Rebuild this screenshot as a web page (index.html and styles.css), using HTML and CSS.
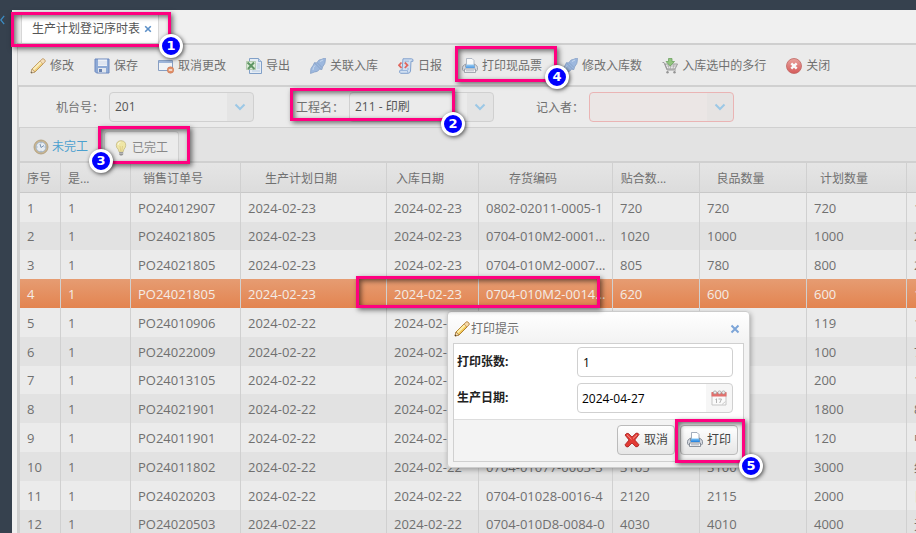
FILE: index.html
```html
<!DOCTYPE html>
<html lang="zh-CN">
<head>
  <meta charset="UTF-8">
  <title>生产计划登记序时表</title>
  <meta name="viewport" content="width=device-width, initial-scale=1.0">
  <link rel="stylesheet" href="styles.css">
</head>
<body>
  <svg class="defs" aria-hidden="true">
    <linearGradient id="gPrint" x1="0" y1="0" x2="0" y2="1"><stop offset="0" stop-color="#7ec4f7"/><stop offset="1" stop-color="#1e7fe0"/></linearGradient>
    <linearGradient id="gRed" x1="0" y1="0" x2="0" y2="1"><stop offset="0" stop-color="#e98b84"/><stop offset="1" stop-color="#cf2a2a"/></linearGradient>
    <symbol id="i-pencil" viewBox="0 0 16 16">
      <path d="M1 15l1-4L11 2q2-2 3.500-.5T14 5L5 14z" fill="#f3c95a" stroke="#b08030"/>
      <path d="M3.500 11.500L12 3" stroke="#fdeeb0" stroke-width="2"/>
      <path d="M11 2q2-2 3.500-.5T14 5l-1 1-3-3z" fill="#f6d9a8" stroke="#b98a55" stroke-width=".7"/>
      <path d="M2 11l3 3-4 1z" fill="#f5deb5" stroke="#a07840" stroke-width=".7"/>
      <path d="M1 13.500L2.500 15H1z" fill="#333"/>
    </symbol>
    <symbol id="i-save" viewBox="0 0 16 16">
      <path d="M1 1h14v14H2.500L1 13.500z" fill="#6f95cf" stroke="#4468b0"/>
      <path d="M4 1.500h9V8H4z" fill="#eef3fa"/><path d="M4 4h9M4 6h9" stroke="#b6c9e4" stroke-width=".7"/>
      <path d="M4 10h8v4.500H4z" fill="#dfe6f0"/><path d="M5 11h3v3H5z" fill="#3f5f9c"/>
    </symbol>
    <symbol id="i-revert" viewBox="0 0 16 16">
      <path d="M.5 2.500h14v10H.5z" fill="#f4f6fa" stroke="#6685b5"/><path d="M1 3h13v2H1z" fill="#86a5d6"/>
      <circle cx="12.500" cy="12" r="3.200" fill="#e2713a" stroke="#b9522a" stroke-width=".6"/><path d="M10.800 12h3.400" stroke="#fff" stroke-width="1.300"/>
    </symbol>
    <symbol id="i-excel" viewBox="0 0 16 16">
      <path d="M3.500.5h9l3 3v12h-12z" fill="#e3edf8" stroke="#5e88bd"/><path d="M12.500.5v3h3" fill="#bcd2ee" stroke="#5e88bd" stroke-width=".8"/>
      <path d="M11 6h3M11 8h3M11 10h3M6 13h8" stroke="#9ab6d8" stroke-width=".8"/>
      <path d="M.5 3.500h9v8h-9z" fill="#d8ead2" stroke="#7da775" stroke-width=".6"/>
      <path d="M1.500 4.500L8.500 11M8 4.500L2 11" stroke="#317a39" stroke-width="2"/>
    </symbol>
    <symbol id="i-plug" viewBox="0 0 16 16">
      <path d="M.5 15.500Q0 10 3 7.500L4.500 4.500l2 .5L9 2q3-.5 5-1.800h1.500Q15.800 6 12.500 9l-.5 2.500-2.500-.3Q8 14 4.500 14z" fill="#84a8da" stroke="#6084b8" stroke-width=".7"/>
      <path d="M4.500 5L11 11.500M7 4.500l5 5" stroke="#5c7fb4" stroke-width=".7"/><path d="M3 12q0-3 2-4.500M10 3.500l3-1.500" stroke="#b9d0ee" fill="none"/>
    </symbol>
    <symbol id="i-script" viewBox="0 0 16 16">
      <path d="M5 .8h8.500q2 0 1.500 2.500h-2L12.500 13q-.4 2.300-2.500 2.300H2.500Q.8 14.500 2 12.200h2z" fill="#c9dcf4" stroke="#5d88c4"/>
      <path d="M2 12.500h7.500q-.3 2 .7 2.600M6.500 3.200H11M9 11h2" fill="none" stroke="#7fa4d6"/>
      <path d="M3.500 4.500L1 7.200 3.500 10M6.800 4.500l2.700 2.700L6.800 10" fill="none" stroke="#dd3b30" stroke-width="1.800"/>
    </symbol>
    <symbol id="i-print" viewBox="0 0 16 16">
      <path d="M4.500.5H10L12 2.500V9H4.500z" fill="#fff" stroke="#8b98ab" stroke-width=".8"/>
      <path d="M3.500 6L1 8q-.8 1-.5 3.500 0 1 1 1.200h13q1-.2 1-1.200Q15.800 9 15 8l-2.500-2v3h-9z" fill="#d3d7de" stroke="#747b88" stroke-width=".8"/>
      <path d="M4.500 6.500H12L13 10H3.500z" fill="url(#gPrint)"/>
      <path d="M2.500 11h11v3.500h-11z" fill="#f5f6f8" stroke="#747b88" stroke-width=".8"/><path d="M4 12.800h8" stroke="#a9b0bc"/>
    </symbol>
    <symbol id="i-cart" viewBox="0 0 16 16">
      <path d="M.5 4.500H2l3 7.500h9M3 6h12.500L13 11H5z" fill="#e4e4e4" stroke="#777" stroke-width=".9"/>
      <path d="M5 8h10M6 6l1 5M8.500 6.500V11M12 6l-1 5" stroke="#929292" stroke-width=".7"/>
      <circle cx="5.500" cy="14.200" r="1.200" fill="#777"/><circle cx="12.500" cy="14.200" r="1.200" fill="#777"/>
      <path d="M6.500.5h3.500v3h2.500L8.200 8 4 3.500h2.500z" fill="#75b95c" stroke="#458b35" stroke-width=".8"/>
    </symbol>
    <symbol id="i-close" viewBox="0 0 16 16">
      <circle cx="8" cy="8" r="7.500" fill="url(#gRed)" stroke="#b13a36" stroke-width=".8"/>
      <path d="M5.300 5.300l5.400 5.400M10.700 5.300l-5.400 5.400" stroke="#fff" stroke-width="2.400"/>
    </symbol>
    <symbol id="i-clock" viewBox="0 0 16 16">
      <circle cx="8" cy="8" r="7" fill="#c2a878" stroke="#9a8256" stroke-width=".8"/><circle cx="8" cy="8" r="5" fill="#e9f0f7" stroke="#7c9abc" stroke-width=".8"/>
      <path d="M7 5l1 3.500L11 6.500M8 3.500v.8M8 11.800v.8M3.700 8h.8M11.600 8h.8" stroke="#577ba5" fill="none"/>
    </symbol>
    <symbol id="i-bulb" viewBox="0 0 16 16">
      <path d="M8 .7q5 .3 4.700 5-.2 2-1.700 3.500L10 12H6.200L5.200 9.200Q3.300 7.700 3.300 5.500 3.300 1 8 .7z" fill="#f1e58f" stroke="#b8a860" stroke-width=".8"/>
      <path d="M5 5q.3-2.500 2.500-2.800" stroke="#fffbe0" fill="none"/><path d="M7 6l.7 5M9.500 6l-.7 5" stroke="#d1b04c" stroke-width=".6"/>
      <path d="M6.200 12h4v2.500L9 15.500H7.300L6.200 14.500z" fill="#777"/><path d="M6.200 13.300h4" stroke="#ccc" stroke-width=".7"/>
    </symbol>
    <symbol id="i-cross" viewBox="0 0 16 16">
      <path d="M1 3q1.500-2.500 3.500-1.500L8 5l4-3.800q2-.7 3 1.300L10.800 8l4.200 4.800q-.8 2.500-3.200 2L8 11l-4 4q-2.300.3-3-2.200L5 8z" fill="#e23a34" stroke="#a51a1a" stroke-width=".8"/>
      <path d="M3 2.800l4.500 4.400M13 2.800L9 6.500" stroke="#f59a92"/>
    </symbol>
    <symbol id="i-calendar" viewBox="0 0 16 16">
      <path d="M1 3h14v12H1z" fill="#fafafa" stroke="#c6c6c6"/><path d="M.5 2h15v4.500H.5z" fill="#e36f6c"/>
      <circle cx="4" cy="2.500" r="1.600" fill="#eee" stroke="#9a9a9a" stroke-width=".7"/><circle cx="8.500" cy="2.500" r="1.600" fill="#eee" stroke="#9a9a9a" stroke-width=".7"/><circle cx="12.500" cy="2.500" r="1.600" fill="#eee" stroke="#9a9a9a" stroke-width=".7"/>
      <path d="M4.500 9.500l1-.7V13M7.500 9h3L8.700 13" stroke="#b3b3b3" fill="none"/><path d="M11 14.500l3.500-3" stroke="#ccc"/>
    </symbol>
    <symbol id="i-down" viewBox="0 0 12 8"><path d="M1.500 1.500L6 6l4.500-4.500" fill="none" stroke="#9cc8e6" stroke-width="2"/></symbol>
    <symbol id="i-x" viewBox="0 0 10 10"><path d="M1.500 1.500l7 7M8.500 1.500l-7 7" fill="none" stroke="currentColor" stroke-width="2"/></symbol>
    <symbol id="i-back" viewBox="0 0 6 12"><path d="M5 1L1 6l4 5" fill="none" stroke="#3c8cc4" stroke-width="1.500"/></symbol>
  </svg>

  <aside class="rail"><svg class="back"><use href="#i-back"/></svg></aside>

  <main class="page">
    <nav class="page-tabs">
      <a href="#" class="page-tab">生产计划登记序时表 <svg class="tab-close"><use href="#i-x"/></svg></a>
    </nav>

    <section class="panel">
      <div class="toolbar">
        <button><svg><use href="#i-pencil"/></svg>修改</button>
        <button><svg><use href="#i-save"/></svg>保存</button>
        <button><svg><use href="#i-revert"/></svg>取消更改</button>
        <button><svg><use href="#i-excel"/></svg>导出</button>
        <button><svg><use href="#i-plug"/></svg>关联入库</button>
        <button><svg><use href="#i-script"/></svg>日报</button>
        <button><svg><use href="#i-print"/></svg>打印现品票</button>
        <button><svg><use href="#i-plug"/></svg>修改入库数</button>
        <button><svg><use href="#i-cart"/></svg>入库选中的多行</button>
        <button><svg><use href="#i-close"/></svg>关闭</button>
      </div>

      <form class="filters">
        <div class="field">
          <label for="machine">机台号：</label>
          <span class="combo"><select id="machine"><option>201</option></select><svg><use href="#i-down"/></svg></span>
        </div>
        <div class="field">
          <label for="process">工程名：</label>
          <span class="combo"><select id="process"><option>211 - 印刷</option></select><svg><use href="#i-down"/></svg></span>
        </div>
        <div class="field">
          <label for="writer">记入者：</label>
          <span class="combo invalid"><select id="writer"><option></option></select><svg><use href="#i-down"/></svg></span>
        </div>
      </form>

      <nav class="status-tabs">
        <a href="#"><svg><use href="#i-clock"/></svg>未完工</a>
        <a href="#" class="active"><svg><use href="#i-bulb"/></svg>已完工</a>
      </nav>

      <div class="grid">
        <table>
          <colgroup>
            <col class="c-no"><col class="c-flag"><col class="c-order"><col class="c-plan"><col class="c-in">
            <col class="c-code"><col class="c-fit"><col class="c-good"><col class="c-qty"><col>
          </colgroup>
          <thead>
            <tr><th>序号</th><th class="left">是...</th><th>销售订单号</th><th>生产计划日期</th><th>入库日期</th><th>存货编码</th><th>贴合数...</th><th>良品数量</th><th>计划数量</th><th></th></tr>
          </thead>
          <tbody>
            <tr><td>1</td><td>1</td><td>PO24012907</td><td>2024-02-23</td><td>2024-02-23</td><td>0802-02011-0005-1</td><td>720</td><td>720</td><td>720</td><td>1</td></tr>
            <tr><td>2</td><td>1</td><td>PO24021805</td><td>2024-02-23</td><td>2024-02-23</td><td>0704-010M2-0001...</td><td>1020</td><td>1000</td><td>1000</td><td>2</td></tr>
            <tr><td>3</td><td>1</td><td>PO24021805</td><td>2024-02-23</td><td>2024-02-23</td><td>0704-010M2-0007...</td><td>805</td><td>780</td><td>800</td><td>2</td></tr>
            <tr class="selected"><td>4</td><td>1</td><td>PO24021805</td><td>2024-02-23</td><td>2024-02-23</td><td>0704-010M2-0014...</td><td>620</td><td>600</td><td>600</td><td>1</td></tr>
            <tr><td>5</td><td>1</td><td>PO24010906</td><td>2024-02-22</td><td>2024-02-22</td><td></td><td></td><td></td><td>119</td><td>1</td></tr>
            <tr><td>6</td><td>1</td><td>PO24022009</td><td>2024-02-22</td><td>2024-02-22</td><td></td><td></td><td></td><td>100</td><td>7</td></tr>
            <tr><td>7</td><td>1</td><td>PO24013105</td><td>2024-02-22</td><td>2024-02-22</td><td></td><td></td><td></td><td>200</td><td>1</td></tr>
            <tr><td>8</td><td>1</td><td>PO24021901</td><td>2024-02-22</td><td>2024-02-22</td><td></td><td></td><td></td><td>1800</td><td>8</td></tr>
            <tr><td>9</td><td>1</td><td>PO24011901</td><td>2024-02-22</td><td>2024-02-22</td><td></td><td></td><td></td><td>120</td><td>中</td></tr>
            <tr><td>10</td><td>1</td><td>PO24011802</td><td>2024-02-22</td><td>2024-02-22</td><td>0704-01077-0003-3</td><td>3165</td><td>3100</td><td>3000</td><td>纸</td></tr>
            <tr><td>11</td><td>1</td><td>PO24020203</td><td>2024-02-22</td><td>2024-02-22</td><td>0704-01028-0016-4</td><td>2120</td><td>2115</td><td>2000</td><td>日</td></tr>
            <tr><td>12</td><td>1</td><td>PO24020503</td><td>2024-02-22</td><td>2024-02-22</td><td>0704-010D8-0084-0</td><td>4030</td><td>4010</td><td>4000</td><td>无</td></tr>
          </tbody>
        </table>
      </div>
    </section>
  </main>

  <div class="dialog" role="dialog" aria-labelledby="dialogTitle">
    <header>
      <svg class="icon"><use href="#i-pencil"/></svg>
      <span id="dialogTitle">打印提示</span>
      <button class="dialog-close" aria-label="关闭"><svg><use href="#i-x"/></svg></button>
    </header>
    <form class="dialog-body">
      <div class="row">
        <label for="copies">打印张数:</label>
        <input type="text" id="copies" value="1">
      </div>
      <div class="row">
        <label for="date">生产日期:</label>
        <span class="date"><input type="text" id="date" value="2024-04-27"><svg><use href="#i-calendar"/></svg></span>
      </div>
      <div class="actions">
        <button type="button"><svg><use href="#i-cross"/></svg>取消</button>
        <button type="button"><svg><use href="#i-print"/></svg>打印</button>
      </div>
    </form>
  </div>

  <!-- step callouts -->
  <div class="mark mark-tab"><b>1</b></div>
  <div class="mark mark-process"><b>2</b></div>
  <div class="mark mark-done"><b>3</b></div>
  <div class="mark mark-print"><b>4</b></div>
  <div class="mark mark-row"></div>
  <div class="mark mark-submit"><b>5</b></div>
</body>
</html>
```
FILE: styles.css
```css
* { box-sizing: border-box; }
body { margin: 0; padding-top: 10px; height: 100vh; display: flex; overflow: hidden; position: relative; background: #36414e; color: #707070; font: 12px/18px "Open Sans", "Noto Sans CJK SC", sans-serif; }
a { color: inherit; text-decoration: none; }
button, input, select { font: inherit; color: inherit; }
.defs { position: absolute; width: 0; height: 0; }

.rail { width: 12px; flex: none; }
.back { display: block; width: 5px; height: 12px; margin-top: 4px; }

.page { flex: 1; min-width: 0; display: flex; flex-direction: column; background: #f0f0f0; }
.page-tabs { display: flex; padding: 4px 0 0 9px; height: 33px; }
.page-tab { display: flex; align-items: center; gap: 4px; padding: 0 6px 0 10px; background: #fff; border: 1px solid #d8d8d8; border-bottom: 0; color: #555; }
.tab-close { width: 8px; height: 8px; color: #5b8fc7; }

.panel { flex: 1; min-height: 0; margin-left: 5px; border-left: 1px solid #cfcfcf; border-top: 2px solid #cfcfcf; background: #ebebeb; }
.toolbar { display: flex; height: 42px; padding: 2px 0 0 2px; border-bottom: 2px solid #d0d0d0; }
.toolbar button { display: flex; align-items: center; gap: 4px; padding: 0 10px; border: 0; background: none; white-space: nowrap; }
.toolbar svg { width: 16px; height: 16px; opacity: .75; }

.filters { display: flex; align-items: center; gap: 42px; height: 41px; padding-left: 37px; border-left: 1px solid #d0d0d0; border-bottom: 1px solid #d0d0d0; }
.field { display: flex; align-items: center; white-space: nowrap; }
.field label { width: 53px; padding-top: 2px; }
.combo { position: relative; width: 145px; height: 30px; border: 1px solid #d0d0d0; border-radius: 4px; background: linear-gradient(to left, #e4e4e4 26px, #ebebeb 26px); }
.combo.invalid { border-color: #eab4b4; background: linear-gradient(to left, #e6e3e2 26px, #ebe6e5 26px); }
.combo select { display: block; width: 100%; height: 100%; padding: 0 30px 0 5px; border: 0; background: none; appearance: none; color: #555; }
.combo svg { position: absolute; right: 7px; top: 10px; width: 12px; height: 8px; pointer-events: none; }

.status-tabs { display: flex; gap: 6px; height: 33px; padding: 3px 0 0 5px; border-left: 2px solid #d0d0d0; background: #e3e3e3; }
.status-tabs a { display: flex; align-items: center; gap: 3px; padding: 2px 10px 0 8px; color: #4ba0cf; }
.status-tabs a.active { border: 1px solid #d0d0d0; border-bottom: 0; border-radius: 4px 4px 0 0; background: #ebebeb; color: #888; }
.status-tabs svg { width: 16px; height: 16px; opacity: .75; }

.grid { overflow: hidden; border-left: 2px solid #d0d0d0; border-top: 2px solid #d0d0d0; }
table { table-layout: fixed; width: 100%; min-width: 980px; border-spacing: 0; }
.c-no { width: 41px; }
.c-flag { width: 70px; }
.c-order { width: 110px; }
.c-plan { width: 146px; }
.c-in { width: 92px; }
.c-code { width: 134px; }
.c-fit { width: 87px; }
.c-good { width: 107px; }
.c-qty { width: 100px; }
th, td { padding: 0 0 0 7px; border-right: 1px solid #d0d0d0; white-space: nowrap; }
th { height: 30px; padding: 2px 32px 0 7px; border-bottom: 1px solid #c8c8c8; background: linear-gradient(#e5e5e5, #dcdcdc); font-weight: normal; }
th.left { text-align: left; }
td { height: 29px; font-size: 13px; }
tbody tr:nth-child(5n+2) td { height: 28px; }
tbody tr:nth-child(even) { background: #e2e2e2; }
tbody tr.selected { background: linear-gradient(#e69c72, #e38450); color: #f4ece6; }

.dialog { position: absolute; left: 447px; top: 311px; width: 303px; padding: 0 5px 5px; border: 1px solid #ccc; border-radius: 4px; background: linear-gradient(#fff, #f3f3f3 30px); box-shadow: 1px 2px 5px rgba(0,0,0,.3); }
.dialog header { display: flex; align-items: center; height: 31px; padding-top: 2px; }
.dialog header .icon { width: 16px; height: 16px; margin: 0 1px; }
.dialog-close { margin-left: auto; padding: 0 4px; border: 0; background: none; color: #7da5d8; }
.dialog-close svg { display: block; width: 10px; height: 10px; }
.dialog-body { border: 1px solid #d0d0d0; background: #fff; color: #222; }
.row { display: flex; padding: 3px 10px 3px 3px; }
.row label { flex: none; width: 120px; padding-top: 6px; font-weight: bold; }
.row input { flex: 1; min-width: 0; height: 30px; padding: 0 5px; border: 1px solid #d0d0d0; border-radius: 4px; background: #fff; color: #000; }
.date { flex: 1; min-width: 0; display: flex; align-items: center; border: 1px solid #d0d0d0; border-radius: 4px; background: linear-gradient(to left, #f6f6f6 26px, #fff 26px); }
.row .date input { height: 28px; padding: 0 4px; border: 0; background: none; }
.date svg { flex: none; width: 16px; height: 16px; margin-right: 5px; }
.actions { display: flex; justify-content: flex-end; gap: 5px; height: 42px; padding: 5px; margin-top: 3px; border-top: 1px solid #ddd; background: #f3f3f3; }
.actions button { display: flex; align-items: center; gap: 4px; height: 30px; padding: 0 6px; border: 1px solid #bbb; border-radius: 4px; background: linear-gradient(#fff, #e6e6e6); color: #444; }
.actions svg { width: 16px; height: 16px; }

.mark { position: absolute; border: 3px solid #ff0080; box-shadow: 2px 2px 5px rgba(0,0,0,.55), inset 2px 2px 5px rgba(0,0,0,.55); pointer-events: none; }
.mark b { position: absolute; right: -15px; bottom: -14px; width: 24px; height: 24px; border: 3px solid #fff; border-radius: 50%; background: #0000fe; box-shadow: 1px 1px 4px rgba(0,0,0,.7); color: #fff; font: bold 13px/18px "DejaVu Sans", sans-serif; text-align: center; }
.mark-tab { left: 11px; top: 12px; width: 160px; height: 35px; }
.mark-process { left: 290px; top: 88px; width: 165px; height: 33px; }
.mark-process b { bottom: -18px; right: -13px; }
.mark-done { left: 98px; top: 126px; width: 92px; height: 38px; }
.mark-done b { right: auto; left: -12px; bottom: -12px; }
.mark-print { left: 455px; top: 46px; width: 102px; height: 36px; }
.mark-print b { bottom: -10px; }
.mark-row { left: 356px; top: 276px; width: 244px; height: 32px; }
.mark-submit { left: 675px; top: 419px; width: 70px; height: 44px; }
.mark-submit b { right: -21px; bottom: -18px; }
```
